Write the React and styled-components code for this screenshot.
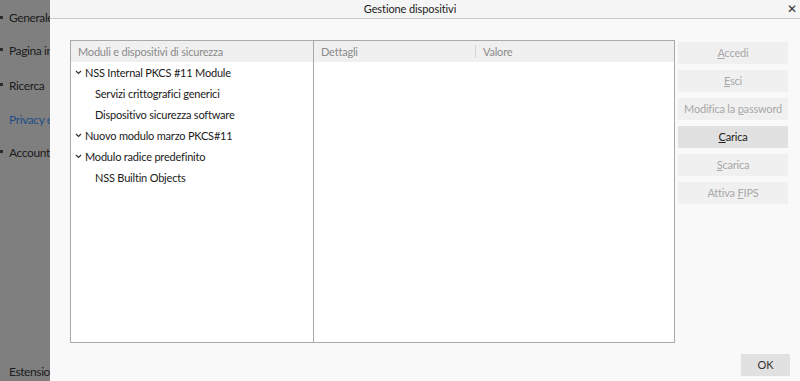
import React from 'react'
import styled, { createGlobalStyle } from 'styled-components'

const Global = createGlobalStyle`
  *, *::before, *::after { box-sizing: border-box; }
  html, body { margin: 0; padding: 0; }
  body {
    width: 800px;
    height: 381px;
    overflow: hidden;
    font-family: Lato, "Noto Sans", sans-serif;
    background: #7f7f7f;
  }
`

const Screen = styled.div`
  display: flex;
  width: 800px;
  height: 381px;
`

const Sidebar = styled.div`
  width: 50px;
  flex: none;
  background: #7f7f7f;
  display: flex;
  flex-direction: column;
  overflow: hidden;
`

const NavItem = styled.div`
  height: ${p => p.h}px;
  display: flex;
  align-items: center;
  padding-left: 9px;
  font-size: 12px;
  letter-spacing: -0.4px;
  white-space: nowrap;
  position: relative;
  color: ${p => (p.active ? '#1e4f86' : '#1c1c1c')};
`

const NavIcon = styled.span`
  position: absolute;
  left: 0;
  top: 50%;
  width: 3px;
  height: 3px;
  margin-top: -2px;
  background: #2a2a2a;
`

const NavSpacer = styled.div`
  flex: 1;
`

const Dialog = styled.div`
  flex: 1;
  display: flex;
  flex-direction: column;
  background: #f9f9f9;
`

const TitleBar = styled.div`
  height: 19px;
  border-bottom: 1px solid #c8c8c8;
  display: flex;
  align-items: center;
  justify-content: center;
  padding-right: 30px;
  position: relative;
  font-size: 11px;
  letter-spacing: -0.1px;
  color: #222;
  background: #f5f5f5;
`

const Close = styled.span`
  position: absolute;
  right: 3px;
  top: 0;
  font-size: 12px;
  color: #333;
  line-height: 17px;
`

const Body = styled.div`
  flex: 1;
  display: flex;
  padding: 21px 12px 0 20px;
  gap: 3px;
`

const Panels = styled.div`
  display: flex;
  height: 303px;
`

const Panel = styled.div`
  width: ${p => p.w}px;
  border: 1px solid #a9a9a9;
  border-left: ${p => (p.noLeft ? 'none' : '1px solid #a9a9a9')};
  background: #fff;
  display: flex;
  flex-direction: column;
`

const Header = styled.div`
  height: 21px;
  background: #f0f0f0;
  display: flex;
  align-items: center;
  font-size: 11px;
  letter-spacing: -0.2px;
  color: #8a8a8a;
`

const HeaderCell = styled.div`
  width: ${p => (p.w ? `${p.w}px` : 'auto')};
  flex: ${p => (p.w ? 'none' : 1)};
  padding-left: 7px;
  height: 13px;
  line-height: 13px;
  border-right: ${p => (p.divider ? '1px solid #d6d6d6' : 'none')};
`

const Tree = styled.div`
  display: flex;
  flex-direction: column;
`

const Row = styled.div`
  height: 21px;
  display: flex;
  align-items: center;
  padding-left: ${p => (p.child ? 24 : 4)}px;
  font-size: 11px;
  letter-spacing: -0.2px;
  color: #1a1a1a;
  white-space: nowrap;
`

const Chevron = styled.svg`
  width: 7px;
  height: 5px;
  margin-right: 3px;
  flex: none;
`

const Buttons = styled.div`
  display: flex;
  flex-direction: column;
  gap: 6px;
  padding-top: 2px;
`

const Button = styled.div`
  width: 110px;
  height: 22px;
  display: flex;
  align-items: center;
  justify-content: center;
  font-size: 11px;
  letter-spacing: -0.2px;
  white-space: nowrap;
  background: ${p => (p.enabled ? '#e1e1e1' : '#f0f0f0')};
  color: ${p => (p.enabled ? '#222' : '#a8a8a8')};
  u { text-decoration: underline; text-underline-offset: 1px; }
`

const Footer = styled.div`
  height: 39px;
  display: flex;
  justify-content: flex-end;
  align-items: flex-start;
  padding: 11px 10px 0 0;
`

const OkButton = styled.div`
  width: 49px;
  height: 22px;
  background: #e1e1e1;
  display: flex;
  align-items: center;
  justify-content: center;
  font-size: 11px;
  color: #333;
`

const Chev = () => (
  <Chevron viewBox="0 0 7 5">
    <path d="M1 1 L3.5 3.5 L6 1" fill="none" stroke="#333" strokeWidth="1.2" />
  </Chevron>
)

const tree = [
  { label: 'NSS Internal PKCS #11 Module' },
  { label: 'Servizi crittografici generici', child: true },
  { label: 'Dispositivo sicurezza software', child: true },
  { label: 'Nuovo modulo marzo PKCS#11' },
  { label: 'Modulo radice predefinito' },
  { label: 'NSS Builtin Objects', child: true },
]

const buttons = [
  { pre: '', u: 'A', post: 'ccedi' },
  { pre: '', u: 'E', post: 'sci' },
  { pre: 'Modifica la ', u: 'p', post: 'assword' },
  { pre: '', u: 'C', post: 'arica', enabled: true },
  { pre: '', u: 'S', post: 'carica' },
  { pre: 'Attiva ', u: 'F', post: 'IPS' },
]

export default function App() {
  return (
    <Screen>
      <Global />
      <Sidebar>
        <NavItem h={35}><NavIcon />Generale</NavItem>
        <NavItem h={30}><NavIcon />Pagina iniziale</NavItem>
        <NavItem h={40}><NavIcon />Ricerca</NavItem>
        <NavItem h={28} active>Privacy e sicurezza</NavItem>
        <NavItem h={38}><NavIcon />Account</NavItem>
        <NavSpacer />
        <NavItem h={20}>Estensioni</NavItem>
      </Sidebar>
      <Dialog>
        <TitleBar>
          Gestione dispositivi
          <Close>✕</Close>
        </TitleBar>
        <Body>
          <Panels>
            <Panel w={244}>
              <Header>
                <HeaderCell>Moduli e dispositivi di sicurezza</HeaderCell>
              </Header>
              <Tree>
                {tree.map(t => (
                  <Row key={t.label} child={t.child}>
                    {!t.child && <Chev />}
                    {t.label}
                  </Row>
                ))}
              </Tree>
            </Panel>
            <Panel w={361} noLeft>
              <Header>
                <HeaderCell w={162} divider>Dettagli</HeaderCell>
                <HeaderCell>Valore</HeaderCell>
              </Header>
            </Panel>
          </Panels>
          <Buttons>
            {buttons.map(b => (
              <Button key={b.u + b.post} enabled={b.enabled}>
                <span>
                  {b.pre}
                  <u>{b.u}</u>
                  {b.post}
                </span>
              </Button>
            ))}
          </Buttons>
        </Body>
        <Footer>
          <OkButton>OK</OkButton>
        </Footer>
      </Dialog>
    </Screen>
  )
}
